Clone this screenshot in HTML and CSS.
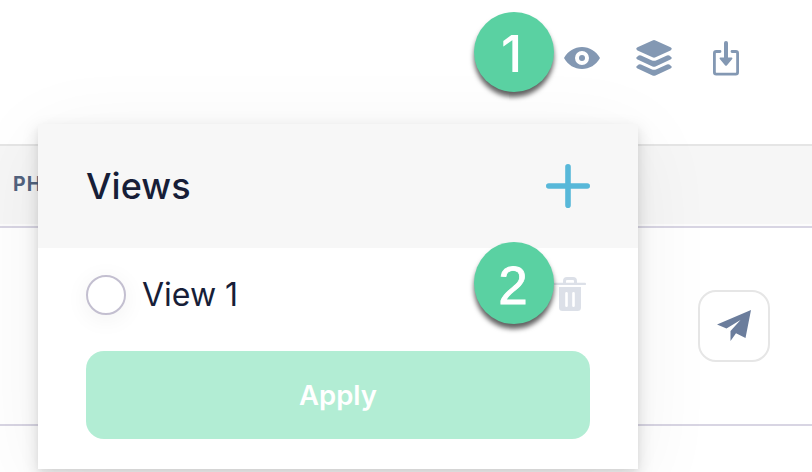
FILE: index.html
```html
<!DOCTYPE html>
<html lang="en">
<head>
<meta charset="utf-8">
<title>Views</title>
<link rel="stylesheet" href="styles.css">
</head>
<body>
<header class="toolbar">
  <svg class="eye" viewBox="0 0 36 22"><path fill-rule="evenodd" d="M0 11C4 4 10.500 0 18 0s14 4 18 11c-4 7-10.500 11-18 11S4 18 0 11Zm18-7a7 7 0 1 0 0 14 7 7 0 0 0 0-14Z"/><circle cx="18" cy="11" r="3"/></svg>
  <svg class="layers" viewBox="0 0 36 36"><path d="M16.500.4Q18-.3 19.500.4L34.500 7.200Q37 8.800 34.500 10.400L19.500 17.300Q18 18 16.500 17.300L1.500 10.400Q-1 8.800 1.500 7.200Z"/><path d="M1.500 16.400Q3 15 5 15.500L15.500 20.200Q18 21.300 20.500 20.200L31 15.500Q33 15 34.500 16.400 37 18 34.500 19.600L19.500 26.400Q18 27.100 16.500 26.400L1.500 19.600Q-1 18 1.500 16.400Z"/><path d="M1.500 25.400Q3 24 5 24.500L15.500 29.200Q18 30.300 20.500 29.200L31 24.500Q33 24 34.500 25.400 37 27 34.500 28.600L19.500 35.400Q18 36.100 16.500 35.400L1.500 28.600Q-1 27 1.500 25.400Z"/></svg>
  <svg class="save" viewBox="0 0 26 35"><path class="line" d="M7 10.500H3.200Q1.400 10.500 1.400 12.300V31.300Q1.400 33.100 3.200 33.100H22.800Q24.600 33.100 24.600 31.300V12.300Q24.600 10.500 22.800 10.500H19"/><path class="stem" d="M13 2v17"/><path d="M7.300 16.500h11.400q1.300.3.500 1.500l-5.200 6.300q-1 1-2 0l-5.200-6.300q-.8-1.200.5-1.500Z"/></svg>
</header>
<main>
  <div class="table-head">PHONE</div>
  <div class="table-row">
    <button class="send" aria-label="Send"><svg viewBox="0 0 34 32"><path d="M34 0 28.500 28 19 23.300 13.500 31V21L23.500 10 9.500 18.500 0 14.500Z"/></svg></button>
  </div>
</main>
<section class="popover">
  <div class="popover-head">
    <h2>Views</h2>
    <svg class="plus" viewBox="0 0 44 44"><path d="M22 2.800v38.400M2.800 22h38.400"/></svg>
  </div>
  <div class="popover-body">
    <div class="view">
      <span class="radio"></span><span class="view-name">View 1</span>
      <svg class="trash" viewBox="0 0 32 34"><path class="handle" d="M10.500 6V4.200Q10.500 1.500 13 1.500h6Q21.500 1.500 21.500 4.200V6"/><path d="M1 5.700h30q1 0 1 1.200t-1 1.200H1q-1 0-1-1.200t1-1.200Z"/><path fill-rule="evenodd" d="M5 10h22v20.500q0 3.500-3.500 3.500h-15Q5 34 5 30.500Zm7.500 5q-1.300 0-1.300 1.300v12.400q0 1.300 1.300 1.300t1.300-1.300V16.300q0-1.300-1.300-1.300Zm7 0q-1.300 0-1.300 1.300v12.400q0 1.300 1.300 1.300t1.300-1.300V16.300q0-1.300-1.300-1.300Z"/></svg>
    </div>
    <button class="apply">Apply</button>
  </div>
</section>
<span class="badge badge-one">1</span>
<span class="badge badge-two">2</span>
</body>
</html>
```
FILE: styles.css
```css
* { box-sizing: border-box; }
body {
  margin: 0;
  width: 812px;
  height: 472px;
  position: relative;
  overflow: hidden;
  background: #fff;
  color: #171e38;
  font-family: Inter, "Liberation Sans", sans-serif;
}
button { padding: 0; font-family: inherit; }
svg { display: block; flex: none; }
.toolbar {
  height: 144px;
  padding: 40px 73px 0 0;
  display: flex;
  justify-content: flex-end;
  align-items: flex-start;
  fill: #8398b3;
}
.eye { width: 36px; height: 22px; margin: 7px 36px 0 0; }
.layers { width: 36px; height: 36px; margin-right: 41px; }
.save { width: 26px; height: 35px; margin-top: 1px; }
.line { fill: none; stroke: #8398b3; stroke-width: 2.8; stroke-linecap: round; }
.stem { stroke: #8398b3; stroke-width: 4; stroke-linecap: round; }
.table-head {
  height: 84px;
  padding-left: 13px;
  border-top: 2px solid #e5e5e5;
  border-bottom: 2px solid #d8d5e3;
  background: linear-gradient(#f6f6f6 78px, #fcfcfc 78px);
  color: #53637e;
  font-size: 19.500px;
  font-weight: 700;
  line-height: 77px;
  letter-spacing: 1px;
}
.table-row {
  height: 198px;
  padding-right: 42px;
  border-bottom: 2px solid #d8d5e3;
  display: flex;
  align-items: center;
  justify-content: flex-end;
}
.send {
  width: 72px;
  height: 72px;
  border: 2px solid #e6e6e6;
  border-radius: 18px;
  background: #fff;
  display: flex;
  align-items: center;
  justify-content: center;
}
.send svg { width: 34px; height: 32px; fill: #6b7d9c; }
.popover {
  position: absolute;
  left: 38px;
  top: 124px;
  width: 600px;
  height: 345px;
  background: #fff;
  box-shadow: 0 6px 16px rgba(0,0,0,.14), 0 14px 80px rgba(0,0,0,.06), 0 4px 6px rgba(0,0,0,.04);
}
.popover-head {
  height: 124px;
  padding: 0 48px;
  background: #f7f7f7;
  display: flex;
  align-items: center;
  justify-content: space-between;
}
h2 { margin: 0; font-size: 36px; font-weight: 500; line-height: 44px; letter-spacing: .05px; }
.plus { width: 44px; height: 44px; fill: none; stroke: #58b8d9; stroke-width: 5.600; stroke-linecap: round; }
.popover-body { padding: 27px 48px 0; }
.view { height: 40px; display: flex; align-items: center; }
.radio {
  width: 40px;
  height: 40px;
  border: 2px solid #c3bfd0;
  border-radius: 50%;
  background: #fff;
  box-shadow: 0 4px 24px rgba(0,0,0,.06);
}
.view-name { margin-left: 16px; font-size: 32px; line-height: 40px; }
.trash { width: 32px; height: 34px; margin: -2px 4px 0 auto; fill: #dce0e8; }
.handle { fill: none; stroke: #dce0e8; stroke-width: 3; }
.apply {
  display: block;
  width: 504px;
  height: 88px;
  margin-top: 36px;
  border: 0;
  border-radius: 18px;
  background: #b2edd4;
  color: #fff;
  font-size: 27.500px;
  font-weight: 600;
  line-height: 88px;
}
.badge {
  position: absolute;
  left: 474px;
  width: 80px;
  border-radius: 50%;
  background: #5ad1a2;
  box-shadow: 0 5px 5px rgba(0,0,0,.62);
  color: #fff;
  text-align: center;
}
.badge-one { top: 12px; height: 80px; padding-right: 5px; font-size: 51px; font-weight: 500; line-height: 84px; }
.badge-two { top: 242px; height: 82px; padding-right: 2px; font-family: "Liberation Sans", sans-serif; font-size: 53px; line-height: 88px; -webkit-text-stroke: .8px #fff; }
```
